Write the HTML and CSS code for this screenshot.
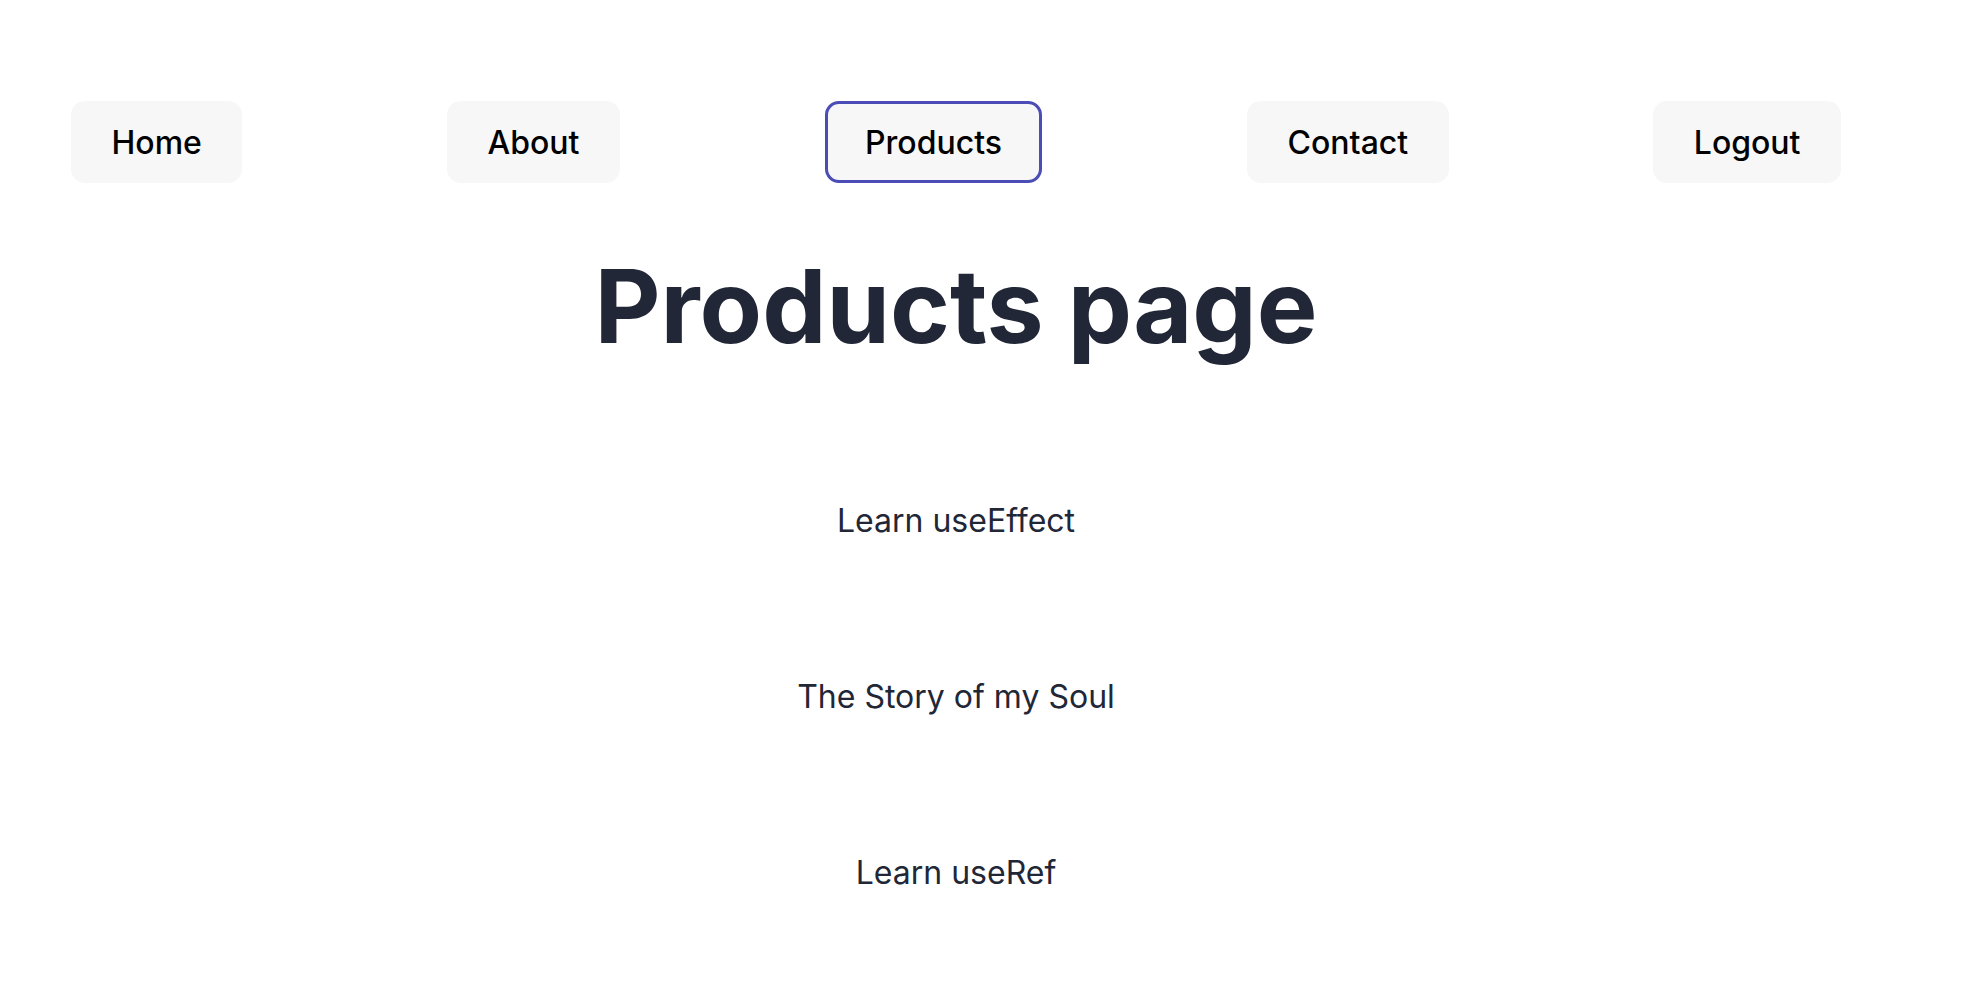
FILE: index.html
```html
<!DOCTYPE html>
<html lang="en">
<head>
<meta charset="utf-8">
<title>Products page</title>
<link rel="stylesheet" href="styles.css">
</head>
<body>
<div class="app">
  <nav class="nav">
    <button class="nav-btn">Home</button>
    <button class="nav-btn">About</button>
    <button class="nav-btn active">Products</button>
    <button class="nav-btn">Contact</button>
    <button class="nav-btn">Logout</button>
  </nav>
  <main class="content">
    <h1 class="title">Products page</h1>
    <p class="item">Learn useEffect</p>
    <p class="item">The Story of my Soul</p>
    <p class="item">Learn useRef</p>
  </main>
</div>
</body>
</html>
```
FILE: styles.css
```css
html, body {
  margin: 0;
  padding: 0;
  background: #ffffff;
}
body {
  font-family: Inter, "Noto Sans", sans-serif;
  color: #222737;
}
.app {
  width: 1912px;
}
.nav {
  display: flex;
  justify-content: space-between;
  align-items: center;
  padding: 101px 71px 0 71px;
}
.nav-btn {
  height: 82px;
  box-sizing: border-box;
  padding: 0 37.5px;
  font-family: Inter, "Noto Sans", sans-serif;
  font-size: 32px;
  font-weight: 500;
  color: #000;
  background: #f7f7f7;
  border: 3px solid transparent;
  border-radius: 14px;
  cursor: pointer;
}
.nav-btn.active {
  border-color: #4b4cb6;
}
.content {
  display: flex;
  flex-direction: column;
  align-items: center;
  gap: 128px;
  padding-top: 62px;
}
.title {
  margin: 0 0 2px 0;
  font-size: 102px;
  font-weight: 700;
  line-height: 1.2;
  color: #222737;
}
.item {
  margin: 0;
  font-size: 32px;
  line-height: 48px;
  font-weight: 400;
  color: #222737;
}
```
